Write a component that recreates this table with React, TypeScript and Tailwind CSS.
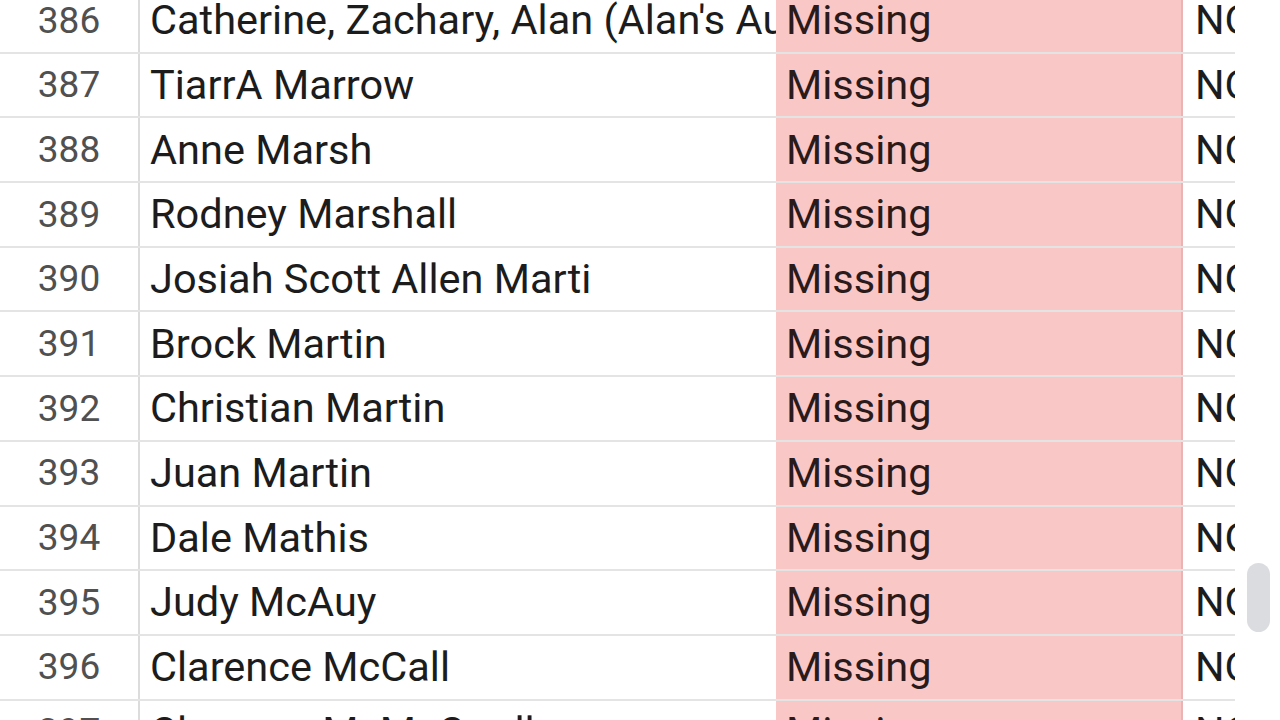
const rows: [number, string][] = [
  [386, "Catherine, Zachary, Alan (Alan's Aunt)"],
  [387, 'TiarrA Marrow'],
  [388, 'Anne Marsh'],
  [389, 'Rodney Marshall'],
  [390, 'Josiah Scott Allen Marti'],
  [391, 'Brock Martin'],
  [392, 'Christian Martin'],
  [393, 'Juan Martin'],
  [394, 'Dale Mathis'],
  [395, 'Judy McAuy'],
  [396, 'Clarence McCall'],
  [397, 'Clarence M. McCardle'],
];

export default function App() {
  return (
    <div
      className="relative h-[720px] w-[1280px] overflow-hidden bg-white"
      style={{ fontFamily: 'Roboto, "Liberation Sans", sans-serif' }}
    >
      <div className="-mt-[11px] w-[1235px] overflow-hidden">
        {rows.map(([num, name]) => (
          <div
            key={num}
            className="grid h-[64.7px] grid-cols-[140px_636px_407px_52px] border-b-2 border-[#e4e4e4]"
          >
            <div className="flex items-center justify-center border-r-2 border-[#dcdcdc] text-[37px] text-[#505050]">
              {num}
            </div>
            <div className="flex items-center overflow-hidden whitespace-nowrap pl-[10px] text-[41.5px] text-[#1c1c1c]">
              {name}
            </div>
            <div className="flex items-center overflow-hidden border-r-2 border-[#eab4b4] bg-[#fac7c7] pl-[10px] text-[41.5px] text-[#2a1a1a]">
              Missing
            </div>
            <div className="flex items-center overflow-hidden whitespace-nowrap pl-[12px] text-[41.5px] text-[#1c1c1c]">
              NO
            </div>
          </div>
        ))}
      </div>
      <div className="absolute left-[1247px] top-[563px] h-[69px] w-[23px] rounded-full bg-[#dadce0]" />
    </div>
  );
}
